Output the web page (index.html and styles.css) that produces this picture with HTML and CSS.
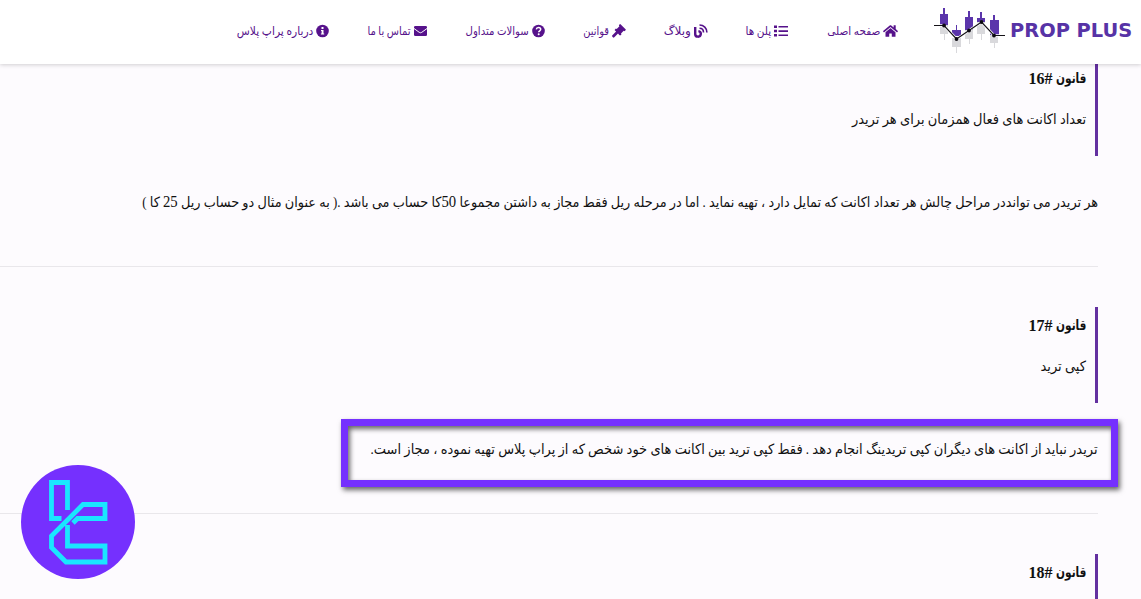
FILE: index.html
```html
<!DOCTYPE html>
<html lang="fa" dir="rtl">
<head>
<meta charset="utf-8">
<title>Prop Plus</title>
<link rel="stylesheet" href="styles.css">
</head>
<body>
<header class="header">
  <a class="logo" dir="ltr">
    <svg class="logo-chart" width="72" height="46" viewBox="0 0 72 46">
      <g fill="#d9d9dc"><path d="M6 18h8v9h-3v6h-1v-6H6zM18 31h9v9h-4v6h-1v-6h-4zM31 23h8v9h-3v5h-1v-5h-4zM43 15h8v12h-3v6h-1v-6h-4zM56 28h8v8h-3v5h-1v-5h-4z"/></g>
      <g fill="#5b35ab"><path d="M9 1h2v6h3v11H6V7h3zM22 18h1v5h4v6h-9v-6h4zM34 4h2v6h3v13h-8V10h3zM46 5h2v6h3v4h-8v-4h3zM59 8h2v5h4v15h-9V13h3z"/></g>
      <path d="M0 18.500h10L22.500 32 35 23.500 47.500 15 60 28.500h11" fill="none" stroke="#fff" stroke-width="2.600"/>
      <path d="M0 18.500h10L22.500 32 35 23.500 47.500 15 60 28.500h11" fill="none" stroke="#151318" stroke-width="1.200"/>
      <g fill="#0b0910"><circle cx="10" cy="18.500" r="1.900"/><circle cx="22.500" cy="32" r="1.900"/><circle cx="35" cy="23.500" r="1.900"/><circle cx="47.500" cy="15" r="1.900"/><circle cx="60" cy="28.500" r="1.900"/></g>
    </svg>
    <span class="logo-name">PROP PLUS</span>
  </a>
  <nav class="nav">
    <a class="item home"><svg class="icon" width="15" height="14" viewBox="0 0 576 512"><path d="M280 149 96 300v165c0 9 7 15 15 15h113c9 0 15-7 15-15v-97c0-9 7-16 16-16h66c9 0 16 7 16 16v97c0 8 7 15 16 15h112c8 0 15-7 15-15V300L296 149c-5-4-11-4-16 0zm292 103-84-69V44c0-7-5-12-12-12h-56c-7 0-12 5-12 12v73l-90-74c-17-14-43-14-60 0L4 252c-5 4-6 12-1 17l25 31c4 5 12 6 17 2L280 109c5-4 11-4 16 0l235 193c5 4 13 3 17-2l25-31c5-5 4-13-1-17z"/></svg><span class="label">صفحه اصلی</span></a>
    <a class="item plans"><svg class="icon" width="14" height="14" viewBox="0 0 14 14"><path d="M0 1.500h3v2.500H0zM0 5.800h3v2.500H0zM0 10h3v2.500H0zM4.500 1.900H14v1.700H4.500zM4.500 6.200H14v1.700H4.500zM4.500 10.400H14v1.700H4.500z"/></svg><span class="label">پلن ها</span></a>
    <a class="item blog"><svg class="icon" width="14" height="14" viewBox="0 0 14 14"><path fill="none" stroke="currentColor" stroke-width="2.400" d="M1.200 3v6.800a2.800 2.800 0 1 0 3.200-2.700"/><path fill="none" stroke="currentColor" stroke-width="1.600" d="M5.500 4.200c2.400 0 4 1.800 4 4.200M5.500 1c4.300 0 7.400 3.200 7.400 7.400"/></svg><span class="label">وبلاگ</span></a>
    <a class="item rules"><svg class="icon" width="14" height="14" viewBox="0 0 14 14"><path d="M7.400.600 8.200 0 9 .700l4.300 4.300.6.700-.6.800-.8.700-.8-.5-2.700 2.700.5.800-.7.700-.7.600-.8-.6L6 9.600 2.300 13.300a1 1 0 0 1-1.400 0L.4 12.700a1 1 0 0 1 0-1.400L4.100 7.600 3.200 6.700l-.6-.8.6-.7.7-.6.8.4 2.700-2.700-.5-.8z"/></svg><span class="label">قوانین</span></a>
    <a class="item faq"><svg class="icon" width="13" height="14" viewBox="0 0 13 14"><circle cx="6.500" cy="7" r="6.300"/><path d="M4.300 5.400C4.500 4 5.400 3.500 6.500 3.500c1.300 0 2.200.7 2.200 1.800 0 1.500-2 1.500-2 3" fill="none" stroke="#fff" stroke-width="1.500"/><circle cx="6.700" cy="10.300" r="1" fill="#fff"/></svg><span class="label">سوالات متداول</span></a>
    <a class="item contact"><svg class="icon" width="13" height="14" viewBox="0 0 13 14"><rect y="2" width="13" height="10" rx="1.300"/><path d="M0 4.500 5.200 8.300q1.300.9 2.600 0L13 4.500" fill="none" stroke="#fff" stroke-width="1"/></svg><span class="label">تماس با ما</span></a>
    <a class="item about"><svg class="icon" width="13" height="14" viewBox="0 0 13 14"><circle cx="6.500" cy="7" r="6.300"/><path d="M5.500 3h2v2h-2zM5 6h2.500v3.500h.7v1H4.900v-1h.7V7H5z" fill="#fff"/></svg><span class="label">درباره پراپ پلاس</span></a>
  </nav>
</header>
<main class="rules-list">
  <section class="rule">
    <div class="quote"><h2 class="title"><span class="word">قانون</span><span class="number">&#x061C;#16</span></h2><p class="topic"><span class="fit">تعداد اکانت های فعال همزمان برای هر تریدر</span></p></div>
    <p class="text"><span class="fit long">هر تریدر می توانددر مراحل چالش هر تعداد اکانت که تمایل دارد ، تهیه نماید . اما در مرحله ریل فقط مجاز به داشتن مجموعا <span class="digits">50</span>کا حساب می باشد .( به عنوان مثال دو حساب ریل <span class="digits">25</span> کا )</span></p>
  </section>
  <section class="rule">
    <div class="quote"><h2 class="title"><span class="word">قانون</span><span class="number">&#x061C;#17</span></h2><p class="topic"><span class="fit">کپی ترید</span></p></div>
    <p class="text"><span class="fit">تریدر نباید از اکانت های دیگران کپی تریدینگ انجام دهد . فقط کپی ترید بین اکانت های خود شخص که از پراپ پلاس تهیه نموده ، مجاز است.</span></p>
    <div class="highlight"></div>
  </section>
  <section class="rule last">
    <div class="quote"><h2 class="title"><span class="word">قانون</span><span class="number">&#x061C;#18</span></h2></div>
  </section>
</main>
<svg class="badge" width="114" height="114" viewBox="0 0 114 114">
  <circle cx="57" cy="57" r="57" fill="#7530fe"/>
  <g fill="none" stroke="#1ae6ff" stroke-width="4.800">
    <path d="M46.500 45V17.500h-16v36h10"/>
    <path d="M52 58 56.500 53.500H84V39.500H62L30.500 71V82.500L45 97H84V81H46.500V60"/>
  </g>
</svg>
</body>
</html>
```
FILE: styles.css
```css
* { box-sizing: border-box; }
body {
  margin: 0;
  height: 599px;
  overflow: hidden;
  background: #fdfbfe;
  color: #111;
  font: 16px/24px "Liberation Serif", "DejaVu Sans", serif;
}
h2, p { margin: 0; }
.header {
  position: relative;
  z-index: 2;
  display: flex;
  height: 64px;
  padding-right: 8px;
  background: #fff;
  box-shadow: 0 1px 4px rgba(0, 0, 0, .18);
}
.logo { display: flex; width: 199px; padding-top: 7px; }
.logo-chart { flex: none; }
.logo-name {
  margin: 12px 0 0 4px;
  color: #5733a6;
  font: 700 19.400px/24px "DejaVu Sans", sans-serif;
  white-space: nowrap;
}
.nav { display: flex; gap: 39px; margin-right: 36px; padding-top: 19px; }
.item { display: flex; gap: 3px; height: 24px; color: #56128b; font-size: 11.500px; white-space: nowrap; }
.label { flex: none; transform: scaleX(.91); transform-origin: right center; }
.icon { flex: none; margin-top: 5px; fill: currentColor; }
.home { width: 71px; }
.plans { width: 41px; }
.blog { width: 43px; }
.blog .label { transform: scaleX(1.05); }
.rules { width: 42px; }
.rules .label { transform: scaleX(.86); }
.faq { width: 79px; }
.faq .label { transform: scaleX(.88); }
.contact { width: 59px; }
.contact .label { transform: scaleX(.87); }
.about { width: 93px; }
.about .label { transform: scaleX(.93); }
.rules-list { margin: -4px 43px 0 0; }
.rule { position: relative; height: 247px; }
.rule::after {
  content: "";
  position: absolute;
  top: 206px;
  right: 0;
  left: 0;
  border-top: 1px solid #e9e7eb;
}
.quote { height: 96px; padding: 7px 9px 0 0; border-right: 3px solid #6330a0; }
.last, .last .quote { height: 45px; }
.last::after { display: none; }
.title { display: flex; font-size: 16px; line-height: 24px; }
.word { margin-left: -7px; font-size: 14px; white-space: nowrap; transform: scaleX(.75); transform-origin: right center; }
.topic { margin-top: 16px; }
.text { padding-top: 34px; }
.fit {
  display: inline-block;
  font-size: 14px;
  white-space: nowrap;
  transform: scaleX(.929);
  transform-origin: right center;
}
.long { transform: scaleX(.919); }
.digits { font-size: 16px; }
.highlight {
  position: absolute;
  top: 112px;
  right: -20px;
  width: 777px;
  height: 68px;
  border: 7px solid #7530fe;
  box-shadow: 2px 3px 5px rgba(0, 0, 0, .6), inset 2px 3px 5px rgba(0, 0, 0, .6);
}
.badge { position: absolute; left: 21px; top: 465px; z-index: 3; }
```
